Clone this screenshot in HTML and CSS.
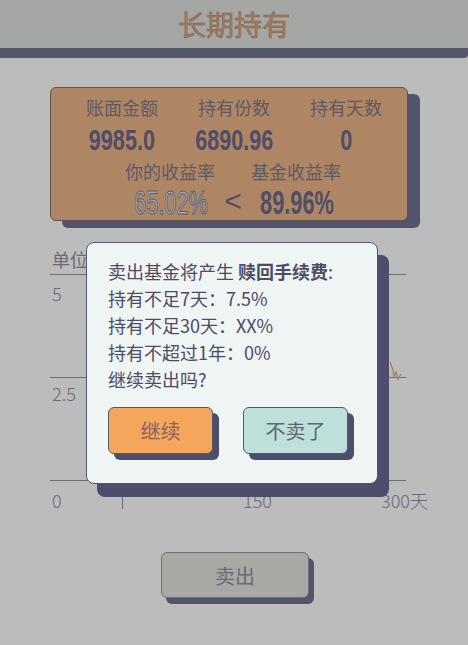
FILE: index.html
```html
<!DOCTYPE html>
<html lang="zh">
<head>
<meta charset="utf-8">
<title>长期持有</title>
<link rel="stylesheet" href="styles.css">
</head>
<body>
<div class="page">
  <header class="topbar"><h1 class="title">长期持有</h1></header>

  <section class="card">
    <div class="stats">
      <div class="stat"><div class="label">账面金额</div><div class="num"><span class="cond">9985.0</span></div></div>
      <div class="stat"><div class="label">持有份数</div><div class="num"><span class="cond">6890.96</span></div></div>
      <div class="stat"><div class="label">持有天数</div><div class="num"><span class="cond">0</span></div></div>
    </div>
    <div class="compare">
      <div class="label c1">你的收益率</div>
      <div class="label c3">基金收益率</div>
      <div class="rate c1"><span class="cond mine">65.02%</span></div>
      <div class="lt c2">&lt;</div>
      <div class="rate c3"><span class="cond">89.96%</span></div>
    </div>
  </section>

  <section class="chart">
    <div class="unit">单位</div>
    <div class="grid-row top"><span class="ylab">5</span></div>
    <div class="grid-row mid"><span class="ylab">2.5</span></div>
    <div class="axis">
      <span class="xlab x0">0</span>
      <span class="tick"></span>
      <span class="xlab x150">150</span>
      <span class="xlab x300">300天</span>
    </div>
    <svg class="trace" width="16" height="24" viewBox="0 0 16 24"><polyline points="2,2 5,10 6,17 8,12 10,19 13,14" fill="none" stroke="#d8a886" stroke-width="1.2"/></svg>
  </section>

  <div class="sell-wrap"><button class="btn sell">卖出</button></div>
</div>

<div class="overlay"></div>

<div class="dialog">
  <p class="line">卖出基金将产生 <b>赎回手续费</b>:</p>
  <p class="line">持有不足7天：7.5%</p>
  <p class="line">持有不足30天：XX%</p>
  <p class="line">持有不超过1年：0%</p>
  <p class="line">继续卖出吗?</p>
  <div class="actions">
    <button class="btn go">继续</button>
    <button class="btn stop">不卖了</button>
  </div>
</div>
</body>
</html>
```

FILE: styles.css
```css
* { box-sizing: border-box; }
html, body { margin: 0; padding: 0; }
body {
  width: 468px;
  height: 645px;
  overflow: hidden;
  background: #fbfbfb;
  font-family: "Noto Sans CJK SC", "Noto Sans", sans-serif;
  color: #4e4b63;
  position: relative;
}
.page { width: 468px; height: 645px; }

.topbar {
  height: 58px;
  background: #dddfdb;
  border-bottom: 10px solid #717391;
  border-bottom-right-radius: 4px;
  display: flex;
  justify-content: center;
  align-items: center;
}
.title {
  margin: 0;
  font-size: 28px;
  font-weight: 400;
  line-height: 48px;
  color: #dea67f;
  -webkit-text-stroke: 0.5px #9c7c68;
}

.card {
  margin: 29px 0 0 50px;
  width: 358px;
  height: 134px;
  background: #e8b384;
  border: 1px solid #826e62;
  border-radius: 6px;
  box-shadow: 12px 7px 0 #6f6f8f;
  padding: 8px 5px 0 15px;
}
.stats {
  display: grid;
  grid-template-columns: repeat(3, 112px);
}
.stat { text-align: center; }
.label {
  font-size: 18px;
  line-height: 22px;
  color: #7c788d;
  text-align: center;
  white-space: nowrap;
}
.num {
  margin-top: 4px;
  height: 30px;
  line-height: 30px;
  font-size: 30px;
}
.cond {
  display: inline-block;
  font-family: "Liberation Sans", Arial, sans-serif;
  font-weight: 700;
  color: #69688b;
  transform: scaleX(0.72);
  transform-origin: center;
}
.compare {
  margin: 8px 0 0 49px;
  display: grid;
  grid-template-columns: 110px 16px 110px;
  grid-template-rows: 22px 33px;
  row-gap: 2px;
}
.c1 { grid-column: 1; }
.c2 { grid-column: 2; }
.c3 { grid-column: 3; }
.compare .label { grid-row: 1; justify-self: center; }
.rate, .lt { grid-row: 2; text-align: center; font-size: 33px; line-height: 33px; }
.rate .cond { transform: scaleX(0.66); }
.cond.mine {
  font-weight: 400;
  color: #dfe3f3;
  -webkit-text-stroke: 1px #7a7a92;
}
.lt {
  justify-self: center;
  font-family: "Liberation Sans", Arial, sans-serif;
  font-size: 30px;
  color: #69688b;
  font-weight: 400;
  white-space: nowrap;
}

.chart {
  position: relative;
  margin: 26px 0 0 50px;
  width: 356px;
}
.unit {
  font-size: 18px;
  line-height: 24px;
  padding-left: 2px;
  color: #8f8e9d;
  height: 27px;
}
.grid-row {
  height: 103px;
  border-top: 1px solid #95959a;
  padding: 6px 0 0 2px;
}
.grid-row.mid { padding-top: 3px; }
.ylab, .xlab {
  font-size: 18px;
  line-height: 24px;
  font-weight: 300;
  color: #8f8e9d;
  white-space: nowrap;
}
.axis {
  position: relative;
  height: 36px;
  border-top: 1px solid #95959a;
}
.xlab { position: absolute; top: 7px; }
.x0 { left: 2px; }
.x150 { left: 193px; }
.x300 { left: 331px; }
.tick {
  position: absolute;
  left: 72px;
  top: 16px;
  width: 1px;
  height: 12px;
  background: #8f8e9d;
}
.trace { position: absolute; left: 338px; top: 113px; }

.sell-wrap { margin: 36px 0 0 161px; }
.btn {
  font-family: "Noto Sans CJK SC", sans-serif;
  font-size: 20px;
  border-radius: 6px;
  padding: 0;
  cursor: pointer;
}
.sell {
  width: 148px;
  height: 46px;
  background: #e0e1dd;
  border: 1px solid #94949f;
  color: #8d8da0;
  box-shadow: 5px 6px 0 #6f6f8f;
}

.overlay {
  position: absolute;
  inset: 0;
  background: rgba(0, 0, 0, 0.25);
}

.dialog {
  position: absolute;
  left: 86px;
  top: 242px;
  width: 292px;
  height: 242px;
  background: #eef5f3;
  border: 1px solid #56566c;
  border-radius: 8px;
  box-shadow: 11px 13px 0 #4d4d6e;
  padding: 15px 0 0 21px;
}
.line {
  margin: 0;
  font-size: 18px;
  line-height: 27px;
  color: #4e4b63;
  white-space: nowrap;
}
.line b { font-weight: 700; }
.actions {
  display: flex;
  gap: 30px;
  margin-top: 14px;
}
.go, .stop {
  width: 105px;
  height: 47px;
  border: 1px solid #5a5568;
  box-shadow: 6px 6px 0 #4d4d6e;
}
.go { background: #f4a65d; color: #8a6262; }
.stop { background: #bde0db; color: #5e6472; }
```
